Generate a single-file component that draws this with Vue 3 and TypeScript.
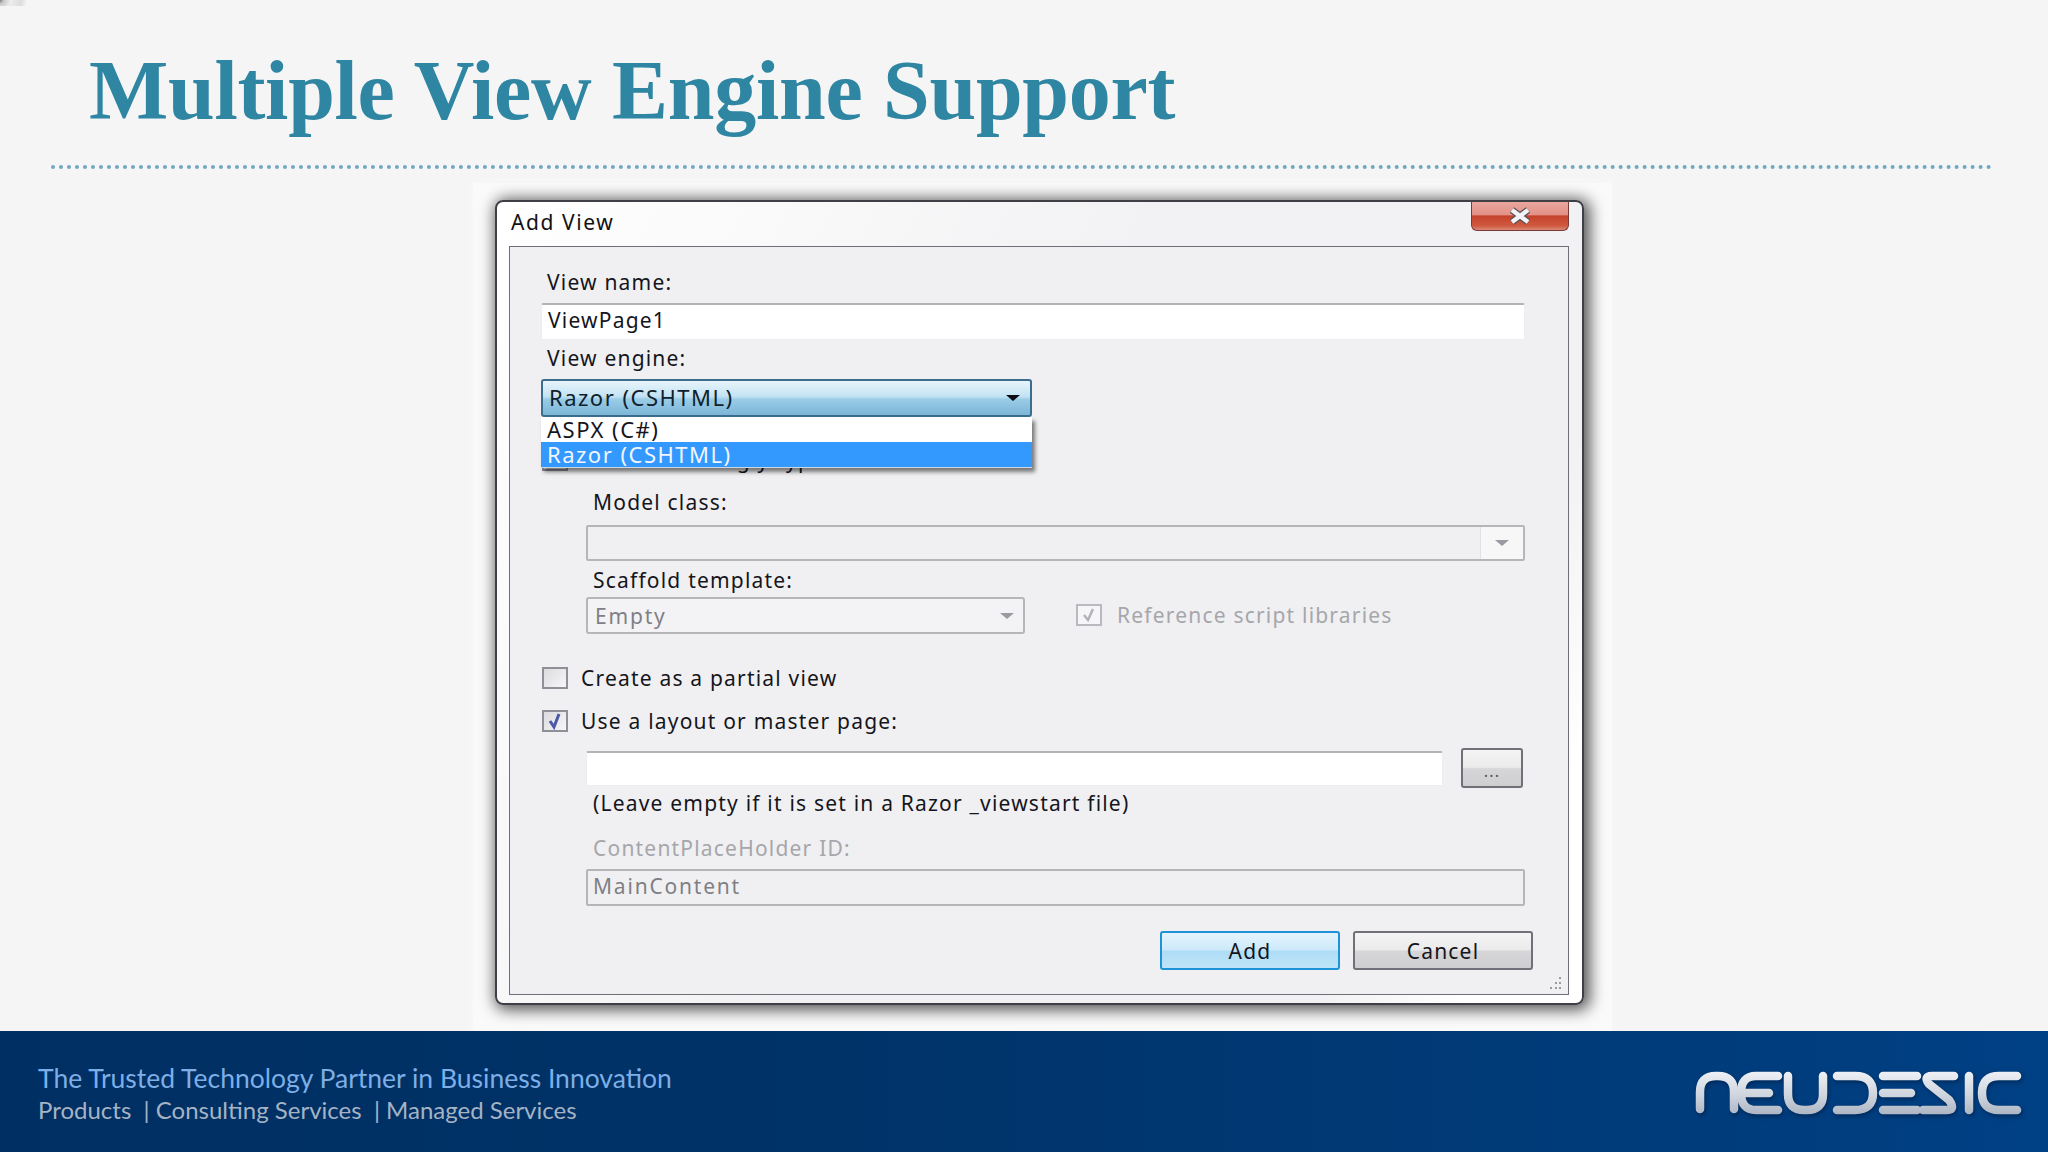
<script setup lang="ts">
const logoPaths: string[] = [
  'M41 69V52Q41 36 57 36H59Q75 36 75 52V69',
  'M119 36H97Q82 36 82 53Q82 70 97 70H119M84 53H110',
  'M129 36V54Q129 70 145 70H148Q164 70 164 54V36',
  'M178 36H196Q214 36 214 53Q214 70 196 70H178',
  'M224 36H258M224 53H252M224 70H258',
  'M295 36H273Q264 36 270 44L290 60Q297 70 288 70H264',
  'M310 36V70',
  'M358 36H340Q323 36 323 53Q323 70 340 70H358'
]
</script>

<template>
  <div class="slide">
    <span class="corner"></span>
    <header class="head">
      <h1 class="title">Multiple View Engine Support</h1>
      <div class="rule"></div>
    </header>

    <main class="stage">
      <div class="halo">
        <section class="win">
          <div class="titlebar">
            <span class="wintitle">Add View</span>
            <button class="close">
              <svg width="26" height="20" viewBox="0 0 26 20">
                <path d="M5 4L21 16M21 4L5 16" stroke="#55505a" stroke-width="7" fill="none" />
                <path d="M5 4L21 16M21 4L5 16" stroke="#f4f4f6" stroke-width="4.5" fill="none" />
              </svg>
            </button>
          </div>
          <div class="panel">
            <div class="lab m-a">View name:</div>
            <div class="input w-full m-b">ViewPage1</div>
            <div class="lab m-c">View engine:</div>
            <div class="combo-wrap m-b">
              <div class="combo">
                <span>Razor (CSHTML)</span>
                <i class="arrow dark"></i>
              </div>
              <ul class="list">
                <li>ASPX (C#)</li>
                <li class="sel">Razor (CSHTML)</li>
              </ul>
            </div>
            <label class="check-row m-d">
              <span class="box"></span>
              <span>Create a strongly-typed view</span>
            </label>
            <div class="lab ind m-e">Model class:</div>
            <div class="input off-input m-f model">
              <span class="drop"><i class="arrow"></i></span>
            </div>
            <div class="lab ind m-g">Scaffold template:</div>
            <div class="scaffold m-h">
              <div class="ddl"><span>Empty</span><i class="arrow"></i></div>
              <div class="refcheck">
                <span class="box dim">
                  <svg width="20" height="18" viewBox="0 0 20 18"><path d="M5 9L9 14L14 3" stroke="#b3b3b8" stroke-width="2.5" fill="none" /></svg>
                </span>
                <span>Reference script libraries</span>
              </div>
            </div>
            <label class="check-row m-i">
              <span class="box"></span>
              <span>Create as a partial view</span>
            </label>
            <label class="check-row m-j">
              <span class="box">
                <svg width="20" height="18" viewBox="0 0 20 18"><path d="M5 9L9 15L14 2" stroke="#4a5aa8" stroke-width="3" fill="none" /></svg>
              </span>
              <span>Use a layout or master page:</span>
            </label>
            <div class="browse m-k">
              <div class="input path"></div>
              <button class="btn dots"><span>...</span></button>
            </div>
            <div class="lab ind m-l">(Leave empty if it is set in a Razor _viewstart file)</div>
            <div class="lab ind muted m-m">ContentPlaceHolder ID:</div>
            <div class="input off-input main-content m-b">MainContent</div>
            <div class="actions">
              <button class="btn def">Add</button>
              <button class="btn">Cancel</button>
            </div>
            <svg class="grip" width="16" height="16" viewBox="0 0 16 16" fill="#9a9aa0">
              <rect x="12" y="2" width="2" height="2" /><rect x="8" y="7" width="2" height="2" /><rect x="12" y="7" width="2" height="2" />
              <rect x="3" y="12" width="2" height="2" /><rect x="8" y="12" width="2" height="2" /><rect x="12" y="12" width="2" height="2" />
            </svg>
          </div>
        </section>
      </div>
    </main>

    <footer class="foot">
      <div class="foot-text">
        <div class="tag">The Trusted Technology Partner in Business Innovation</div>
        <div class="links">Products &nbsp;| Consulting Services &nbsp;| Managed Services</div>
      </div>
      <svg class="logo" width="388" height="112" viewBox="0 0 388 112" role="img" aria-label="Neudesic">
        <defs>
          <linearGradient id="lg" gradientUnits="userSpaceOnUse" x1="0" y1="30" x2="0" y2="76">
            <stop offset="0" stop-color="#f0f2f6" />
            <stop offset="0.55" stop-color="#cfd5de" />
            <stop offset="1" stop-color="#aab3c2" />
          </linearGradient>
        </defs>
        <path v-for="d in logoPaths" :key="d" :d="d" fill="none" stroke="url(#lg)" stroke-width="8.5" stroke-linecap="round" />
      </svg>
    </footer>
  </div>
</template>

<style>
html, body { margin: 0; padding: 0; background: #f5f5f6; }
</style>

<style scoped>
.slide {
  width: 2048px;
  height: 1152px;
  display: flex;
  flex-direction: column;
  overflow: hidden;
  position: relative;
  background: #f5f5f6;
  font-family: "Noto Sans", sans-serif;
}
.corner {
  position: absolute;
  left: 0;
  top: 0;
  width: 26px;
  height: 6px;
  background: radial-gradient(circle at 0 0, #77777a 0, #c8c8ca 14%, #ededee 40%, #dcdcde 80%, #f5f5f6 100%);
}
.head { height: 183px; flex: none; box-sizing: border-box; padding: 0 55px 0 51px; }
.title {
  margin: 0;
  padding: 41px 0 0 38px;
  font: 700 84px/1.2 "Liberation Serif", serif;
  letter-spacing: -0.3px;
  color: #2f86a3;
  white-space: nowrap;
}
.rule { margin-top: 23px; border-top: 4px dotted #6fa9c0; height: 0; }

.stage { flex: 1; min-height: 0; padding-left: 473px; }
.halo {
  width: 1139px;
  height: 848px;
  box-sizing: border-box;
  padding: 17px 0 0 22px;
  background: #fafafb;
  box-shadow: 0 0 8px #fafafb;
}
.win {
  width: 1089px;
  height: 805px;
  box-sizing: border-box;
  border: 2px solid #3f3f46;
  border-radius: 8px;
  background: linear-gradient(115deg, #fff 0, #f2f2f4 45%, #f2f2f4 82%, #fff 92%);
  box-shadow: 3px 2px 15px 3px rgba(0,0,0,.66);
  padding: 0 13px 8px 12px;
  display: flex;
  flex-direction: column;
}
.titlebar {
  height: 44px;
  flex: none;
  display: flex;
  justify-content: space-between;
  align-items: flex-start;
}
.wintitle { font-size: 21px; letter-spacing: 1.6px; line-height: 24px; color: #111; padding: 8px 0 0 2px; }
.close {
  width: 98px;
  height: 29px;
  padding: 0;
  border: 1px solid #7a3a38;
  border-top: 0;
  border-radius: 0 0 6px 6px;
  background: linear-gradient(#e9a59c 0, #e29288 45%, #c5422a 50%, #d0593f 85%, #d98a78 100%);
  display: flex;
  align-items: center;
  justify-content: center;
}
.panel {
  flex: 1;
  position: relative;
  border: 1px solid #6f6f78;
  background: #f0f0f2;
  padding: 23px 0 0 31px;
  font-size: 21px;
  letter-spacing: 1.2px;
  color: #15151c;
}
.lab { height: 24px; line-height: 24px; padding-left: 6px; white-space: nowrap; }
.ind { padding-left: 52px; }
.muted { color: #a6a6ab; }
.m-a { margin-top: 0; }
.m-b { margin-top: 9px; }
.m-c { margin-top: 6px; }
.m-d { margin-top: 31px; }
.m-e { margin-top: 18px; }
.m-f { margin-top: 11px; }
.m-g { margin-top: 7px; }
.m-h { margin-top: 5px; }
.m-i { margin-top: 32px; }
.m-j { margin-top: 19px; }
.m-k { margin-top: 15px; }
.m-l { margin-top: 3px; }
.m-m { margin-top: 21px; }
.input {
  height: 37px;
  box-sizing: border-box;
  background: #fff;
  border: 1px solid #ededf0;
  border-top: 2px solid #b4b4b8;
  border-radius: 2px;
  line-height: 31px;
  padding-left: 6px;
  color: #15151c;
}
.w-full { width: 984px; }
.off-input {
  background: #f0f0f2;
  border: 2px solid #b5b5ba;
  margin-left: 45px;
  width: 939px;
  color: #7f7f85;
  letter-spacing: 1.8px;
}
.model { height: 36px; position: relative; }
.drop {
  position: absolute;
  right: 0;
  top: 0;
  bottom: 0;
  width: 42px;
  background: #f7f7f8;
  border-left: 1px solid #e2e2e5;
  display: flex;
  align-items: center;
  justify-content: center;
}
.main-content { height: 37px; padding-left: 5px; line-height: 31px; }
.combo-wrap { position: relative; width: 491px; height: 38px; font-size: 22px; letter-spacing: 1.5px; }
.combo {
  height: 38px;
  box-sizing: border-box;
  border: 2px solid #3c6d8e;
  border-radius: 3px;
  background: linear-gradient(#e8f5fb 0, #c3e3f3 45%, #98cbe6 55%, #7db6d8 100%);
  display: flex;
  align-items: center;
  justify-content: space-between;
  padding: 0 10px 2px 6px;
  color: #10202c;
}
.list {
  position: absolute;
  z-index: 2;
  left: 0;
  right: 0;
  top: 38px;
  margin: 0;
  padding: 0;
  list-style: none;
  background: #fff;
  border-bottom: 1px solid #cfd6e0;
  box-shadow: 3px 4px 4px rgba(0,0,0,.5);
  color: #15151c;
}
.list li { height: 25px; line-height: 24px; padding-left: 6px; }
.list li.sel { background: #3399ff; color: #f2f6fc; }
.arrow {
  display: block;
  width: 0;
  height: 0;
  border-left: 7px solid transparent;
  border-right: 7px solid transparent;
  border-top: 6px solid #9a9aa2;
}
.arrow.dark { border-top-color: #0c0c12; margin-top: 2px; }
.check-row { display: flex; align-items: center; height: 24px; gap: 13px; white-space: nowrap; }
.box {
  width: 26px;
  height: 22px;
  box-sizing: border-box;
  border: 2px solid #8f8f97;
  background: linear-gradient(135deg, #dcdce0, #f6f6f8);
  display: flex;
  align-items: center;
  justify-content: center;
  flex: none;
  margin-left: 1px;
}
.box svg { display: block; }
.box.dim { border-color: #b9b9bf; background: #f6f6f8; }
.scaffold { display: flex; align-items: center; margin-left: 45px; height: 37px; }
.ddl {
  width: 439px;
  height: 37px;
  box-sizing: border-box;
  border: 2px solid #b5b5ba;
  border-radius: 3px;
  background: #f3f3f5;
  display: flex;
  align-items: center;
  justify-content: space-between;
  padding: 0 9px 0 7px;
  color: #7f7f85;
  letter-spacing: 1.8px;
}
.refcheck { display: flex; align-items: center; gap: 15px; margin-left: 50px; color: #a6a6ab; margin-top: -2px; }
.browse { display: flex; align-items: center; margin-left: 45px; height: 40px; }
.path { width: 857px; height: 35px; }
.btn {
  width: 180px;
  height: 39px;
  box-sizing: border-box;
  border: 2px solid #707078;
  border-radius: 3px;
  background: linear-gradient(#f4f4f5 0, #ebebec 48%, #d6d6d8 52%, #cfcfd2 100%);
  font: inherit;
  letter-spacing: 1.2px;
  color: #15151c;
  padding: 0;
}
.dots {
  width: 62px;
  height: 40px;
  margin-left: 18px;
  color: #555;
  line-height: 42px;
  font-size: 16px;
}
.def {
  border-color: #1f93d8;
  background: linear-gradient(#e4f4fc 0, #cdeafa 48%, #aeddf6 52%, #bfe5f8 100%);
}
.actions { display: flex; gap: 13px; margin: 25px 0 0 619px; }
.grip { position: absolute; right: 5px; bottom: 3px; }

.foot {
  height: 121px;
  flex: none;
  background: linear-gradient(90deg, #002f63 0, #003368 40%, #004084 100%);
  display: flex;
  justify-content: space-between;
  box-sizing: border-box;
  padding: 0 0 0 38px;
  position: relative;
}
.foot-text { padding-top: 29px; font-family: Lato, sans-serif; }
.tag { font-size: 26.5px; line-height: 36px; color: #7eaee6; }
.links { font-size: 24px; line-height: 30px; color: #a5b3c4; margin-top: -1px; }
.logo { margin-top: 9px; margin-right: 1px; filter: drop-shadow(1px 2px 2px rgba(0,20,50,.5)); }
</style>
